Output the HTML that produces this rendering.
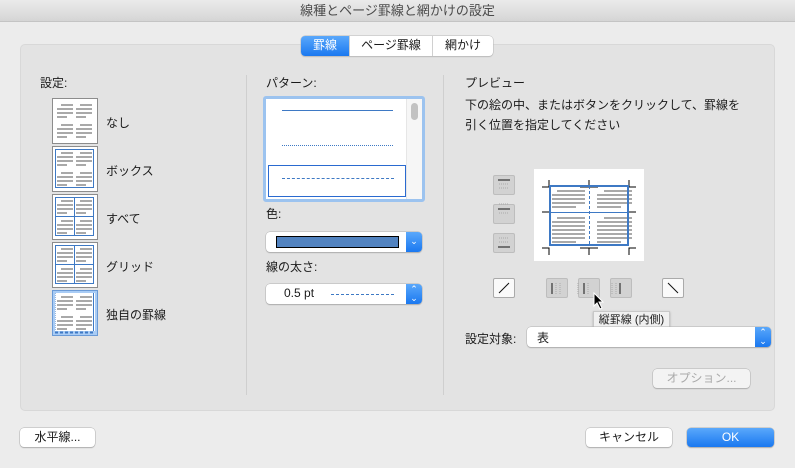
<!DOCTYPE html>
<html><head><meta charset="utf-8"><style>
*{box-sizing:border-box;margin:0;padding:0}
body{width:795px;height:468px;background:#ececec;font-family:"Liberation Sans","Noto Sans CJK JP",sans-serif;font-size:12px;color:#1a1a1a;position:relative;overflow:hidden}
.a{position:absolute}
.title{left:0;top:0;width:795px;height:22px;background:linear-gradient(#ebebeb,#d5d5d5);border-bottom:1px solid #c4c4c4;text-align:center;line-height:21px;font-size:13px;color:#4a4a4a}
.panel{left:20px;top:44px;width:755px;height:367px;background:#e3e3e3;border:1px solid #d8d8d8;border-radius:5px}
.tabs{left:301px;top:36px;height:20px;display:flex;border-radius:4px;background:#fff;box-shadow:0 0 0 .5px #b9b9b9,0 1px 1px #bbb;font-size:12px;line-height:19px}
.tabs div{padding:0 10px;border-right:1px solid #d0d0d0}
.tabs div:last-child{border:none}
.vd{width:1px;background:#cfcfcf;top:75px;height:320px}
.lbl{left:106px}
.btn{background:#fff;border-radius:4px;box-shadow:0 0 0 .5px #b0b0b0,0 1px 1px #aaa;text-align:center;line-height:18px;font-size:12px}
.sq{width:22px;height:20px;background:#d2d2d2;border:1px solid #bdbdbd;border-radius:2px}
.st{width:22px;height:20px;background:#fafafa;border:1px solid #aaa;border-radius:2px}
.pop{background:#fff;border-radius:4px;box-shadow:0 0 0 .5px #b0b0b0,0 1px 1px #aaa}
.arr{position:absolute;right:0;top:0;width:16px;height:100%;background:linear-gradient(#5aa8fb,#1a78f0);border-radius:0 4px 4px 0;color:#fff;font-size:9px;text-align:center}
</style></head><body>
<div class="a title">線種とページ罫線と網かけの設定</div>
<div class="a panel"></div>
<div class="a tabs"><div style="background:linear-gradient(#5aa8fb,#1a78f0);color:#fff;border-radius:4px 0 0 4px;width:49px;text-align:center">罫線</div><div style="width:83px;text-align:center">ページ罫線</div><div style="width:60px;text-align:center">網かけ</div></div>
<div class="a vd" style="left:246px"></div><div class="a vd" style="left:443px"></div>

<div class="a" style="left:40px;top:74px">設定:</div>
<svg class="a" style="left:52px;top:98px" width="46" height="240">
<defs><g id="ln" fill="#a9a9a9">
<rect x="9" y="6" width="12" height="2"/><rect x="5" y="10" width="16" height="2"/><rect x="5" y="14" width="16" height="2"/><rect x="5" y="18" width="10" height="2"/>
<rect x="28" y="6" width="12" height="2"/><rect x="24" y="10" width="16" height="2"/><rect x="24" y="14" width="16" height="2"/><rect x="24" y="18" width="10" height="2"/>
<rect x="9" y="26" width="12" height="2"/><rect x="5" y="30" width="16" height="2"/><rect x="5" y="34" width="16" height="2"/><rect x="5" y="38" width="10" height="2"/>
<rect x="28" y="26" width="12" height="2"/><rect x="24" y="30" width="16" height="2"/><rect x="24" y="34" width="16" height="2"/><rect x="24" y="38" width="10" height="2"/></g></defs>
<g><rect x=".5" y=".5" width="45" height="45" fill="#fff" stroke="#8c8c8c"/><use href="#ln"/></g>
<g transform="translate(0,48)"><rect x=".5" y=".5" width="45" height="45" fill="#fff" stroke="#8c8c8c"/><use href="#ln"/><rect x="3.5" y="3.5" width="38" height="38" fill="none" stroke="#3e79c4"/></g>
<g transform="translate(0,96)"><rect x=".5" y=".5" width="45" height="45" fill="#fff" stroke="#8c8c8c"/><use href="#ln"/><rect x="3.5" y="3.5" width="38" height="38" fill="none" stroke="#3e79c4"/><path d="M22.5 3v39M3 22.5h39" stroke="#3e79c4" fill="none"/></g>
<g transform="translate(0,144)"><rect x=".5" y=".5" width="45" height="45" fill="#fff" stroke="#8c8c8c"/><use href="#ln"/><rect x="3.5" y="3.5" width="38" height="38" fill="none" stroke="#3e79c4"/><path d="M22.5 3v39M3 22.5h39" stroke="#3e79c4" fill="none"/></g>
<g transform="translate(0,192)"><rect x=".5" y=".5" width="45" height="45" fill="#a9ccf5" stroke="#6a9ad6"/><rect x="3" y="3" width="40" height="38" fill="#fff"/><use href="#ln"/><path d="M41.5 3v38" stroke="#3e79c4"/><path d="M3 42.5h40" stroke="#3e79c4" stroke-width="2" stroke-dasharray="3 2"/><path d="M3.5 3v38" stroke="#9ab8de" stroke-dasharray="1 1"/></g>
</svg>
<div class="a lbl" style="top:114px">なし</div>
<div class="a lbl" style="top:162px">ボックス</div>
<div class="a lbl" style="top:210px">すべて</div>
<div class="a lbl" style="top:258px">グリッド</div>
<div class="a lbl" style="top:306px">独自の罫線</div>

<div class="a" style="left:266px;top:74px">パターン:</div>
<div class="a" style="left:263px;top:96px;width:162px;height:106px;border:3px solid #9cc3ef;border-radius:3px;background:#fff">
<div class="a" style="right:0;top:0;width:16px;height:100px;background:#f6f6f6;border-left:1px solid #e6e6e6"><div class="a" style="left:4px;top:4px;width:7px;height:17px;border-radius:4px;background:#c2c2c2"></div></div>
<div class="a" style="left:16px;top:11px;width:111px;border-top:1px solid #3e79c4"></div>
<div class="a" style="left:16px;top:46px;width:111px;border-top:1px dotted #3e79c4"></div>
<div class="a" style="left:2px;top:66px;width:138px;height:32px;border:1px solid #2a6ad0"></div>
<div class="a" style="left:16px;top:79px;width:112px;border-top:1px dashed #3e79c4"></div>
</div>
<div class="a" style="left:266px;top:205px">色:</div>
<div class="a pop" style="left:266px;top:232px;width:156px;height:20px"><div class="a" style="left:10px;top:4px;width:123px;height:12px;background:#5283c0;border:1px solid #000"></div><div class="arr" style="line-height:18px">⌄</div></div>
<div class="a" style="left:266px;top:258px">線の太さ:</div>
<div class="a pop" style="left:266px;top:284px;width:156px;height:20px"><div class="a" style="left:18px;top:2px">0.5 pt</div><div class="a" style="left:65px;top:10px;width:63px;border-top:1px dashed #3e79c4"></div><div class="arr" style="line-height:9px;padding-top:1px">⌃<br>⌄</div></div>

<div class="a" style="left:465px;top:74px">プレビュー</div>
<div class="a" style="left:465px;top:95px;line-height:20px">下の絵の中、またはボタンをクリックして、罫線を<br>引く位置を指定してください</div>
<div class="a sq" style="left:493px;top:175px"></div><div class="a sq" style="left:493px;top:204px"></div><div class="a sq" style="left:493px;top:233px"></div>
<svg class="a" style="left:493px;top:175px" width="22" height="80" stroke="#111" fill="none"><path d="M5 5h12M5 34h12M5 72h12"/><g stroke="#aaa" stroke-dasharray="1 1"><path d="M6 9h10M6 13h10M6 38h10M6 29h10M6 63h10M6 67h10"/></g></svg>
<div class="a" style="left:534px;top:169px;width:110px;height:92px;background:#fff"></div>
<svg class="a" style="left:534px;top:169px" width="110" height="92" fill="none">
<g stroke="#000"><path d="M15 11v7h-7M95 11v7h7M15 86v-7h-7M95 86v-7h7M8 43h7M95 43h7M55 11v7M46 18h18M55 86v-7M46 79h18"/></g>
<g fill="#a9a9a9"><rect x="23" y="21" width="28" height="2"/><rect x="18" y="25" width="33" height="2"/><rect x="18" y="29" width="33" height="2"/><rect x="18" y="33" width="33" height="2"/><rect x="18" y="37" width="24" height="2"/>
<rect x="70" y="21" width="28" height="2"/><rect x="63" y="25" width="35" height="2"/><rect x="63" y="29" width="35" height="2"/><rect x="63" y="33" width="35" height="2"/><rect x="63" y="37" width="24" height="2"/>
<rect x="23" y="48" width="28" height="2"/><rect x="18" y="52" width="33" height="2"/><rect x="18" y="56" width="33" height="2"/><rect x="18" y="60" width="33" height="2"/><rect x="18" y="64" width="33" height="2"/><rect x="18" y="68" width="33" height="2"/><rect x="18" y="72" width="24" height="2"/>
<rect x="70" y="48" width="28" height="2"/><rect x="63" y="52" width="35" height="2"/><rect x="63" y="56" width="35" height="2"/><rect x="63" y="60" width="35" height="2"/><rect x="63" y="64" width="35" height="2"/><rect x="63" y="68" width="35" height="2"/><rect x="63" y="72" width="24" height="2"/></g>
<rect x="16" y="17" width="78" height="59" fill="none" stroke="#3e79c4" stroke-width="2"/>
<path d="M16 43.5h78" stroke="#3e79c4"/><path d="M55.5 17v59" stroke="#3e79c4" stroke-dasharray="3 2"/>
</svg>
<div class="a st" style="left:493px;top:278px"></div><div class="a sq" style="left:546px;top:278px"></div><div class="a sq" style="left:578px;top:278px"></div><div class="a sq" style="left:610px;top:278px"></div><div class="a st" style="left:662px;top:278px"></div>
<svg class="a" style="left:493px;top:278px" width="192" height="20" stroke="#111" fill="none"><path d="M6 15l10-10M175 5l10 10M59 5v11M91 5v11M127 5v11"/><g stroke="#aaa" stroke-dasharray="1 1"><path d="M63 5v11M67 5v11M85 5v11M95 5v11M119 5v11M123 5v11"/></g></svg>
<svg class="a" style="left:593px;top:292px" width="12" height="18"><path d="M1 1v13l3-3 3 6 2-1-3-6h4z" fill="#000" stroke="#fff" stroke-width="1"/></svg>
<div class="a" style="left:593px;top:311px;width:77px;height:18px;background:#f0f0f0;border:1px solid #c8c8c8;font-size:11px;line-height:16px;text-align:center;box-shadow:0 1px 2px #aaa">縦罫線 (内側)</div>
<div class="a" style="left:465px;top:330px">設定対象:</div>
<div class="a pop" style="left:527px;top:327px;width:244px;height:20px"><div class="a" style="left:10px;top:2px">表</div><div class="arr" style="line-height:9px;padding-top:1px">⌃<br>⌄</div></div>
<div class="a btn" style="left:653px;top:369px;width:97px;height:19px;color:#a9a9a9;background:#f3f3f3">オプション...</div>

<div class="a btn" style="left:20px;top:428px;width:75px;height:19px">水平線...</div>
<div class="a btn" style="left:586px;top:428px;width:86px;height:19px">キャンセル</div>
<div class="a btn" style="left:687px;top:428px;width:87px;height:19px;background:linear-gradient(#5aa8fb,#1a78f0);color:#fff">OK</div>
</body></html>
